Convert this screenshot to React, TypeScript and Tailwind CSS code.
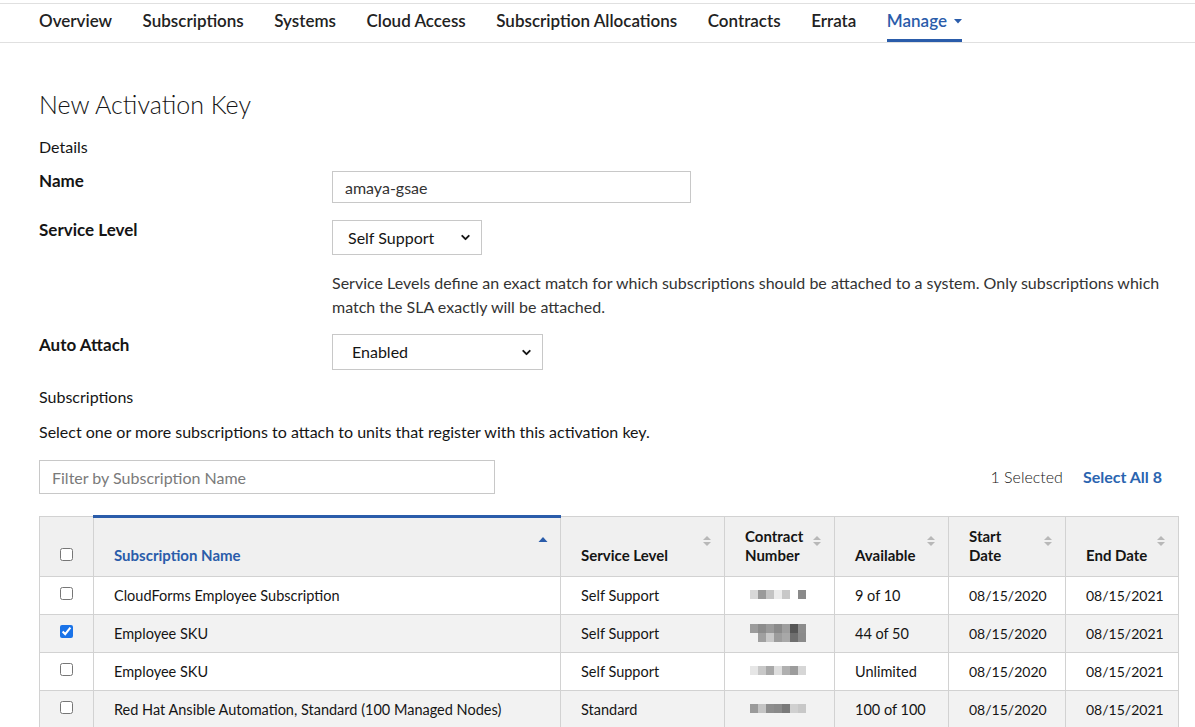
import { ChevronDown } from "lucide-react";

const BLUE = "#2a5caa";

const navItems = [
  "Overview",
  "Subscriptions",
  "Systems",
  "Cloud Access",
  "Subscription Allocations",
  "Contracts",
  "Errata",
];

type Row = {
  name: string;
  level: string;
  contract: string[][];
  available: string;
  checked: boolean;
};

const rows: Row[] = [
  {
    name: "CloudForms Employee Subscription",
    level: "Self Support",
    contract: [["#d8d8d8", "#9a9a9a", "#c4c4c4", "#ececec", "#c8c8c8", "#ffffff", "#8a8a8a"]],
    available: "9 of 10",
    checked: false,
  },
  {
    name: "Employee SKU",
    level: "Self Support",
    contract: [
      ["#9c9c9c", "#8c8c8c", "#9a9a9a", "#8a8a8a", "#9e9e9e", "#555555", "#8c8c8c"],
      ["#f2f2f2", "#a0a0a0", "#c8c8c8", "#9c9c9c", "#a8a8a8", "#6e6e6e", "#8a8a8a"],
    ],
    available: "44 of 50",
    checked: true,
  },
  {
    name: "Employee SKU",
    level: "Self Support",
    contract: [["#e6e6e6", "#c8c8c8", "#a8a8a8", "#dedede", "#b0b0b0", "#9c9c9c", "#d6d6d6"]],
    available: "Unlimited",
    checked: false,
  },
  {
    name: "Red Hat Ansible Automation, Standard (100 Managed Nodes)",
    level: "Standard",
    contract: [["#9a9a9a", "#c4c4c4", "#8e8e8e", "#8a8a8a", "#7a7a7a", "#d0d0d0", "#c8c8c8"]],
    available: "100 of 100",
    checked: false,
  },
];

function SortIcon({ active }: { active?: boolean }) {
  if (active) {
    return (
      <svg width="10" height="12" viewBox="0 0 10 12" className="shrink-0 self-center">
        <path d="M0.5 6 L5 1 L9.5 6 Z" fill={BLUE} />
      </svg>
    );
  }
  return (
    <svg width="10" height="12" viewBox="0 0 10 12" className="shrink-0 self-center">
      <path d="M1 5 L5 1 L9 5 Z" fill="#b8b8b8" />
      <path d="M1 7 L5 11 L9 7 Z" fill="#b8b8b8" />
    </svg>
  );
}

function Pixels({ grid }: { grid: string[][] }) {
  return (
    <div className="flex flex-col">
      {grid.map((line, i) => (
        <div key={i} className="flex">
          {line.map((c, j) => (
            <div key={j} className="h-[9px] w-[8px]" style={{ backgroundColor: c }} />
          ))}
        </div>
      ))}
    </div>
  );
}

function Th({
  children,
  active,
  className = "",
}: {
  children: React.ReactNode;
  active?: boolean;
  className?: string;
}) {
  return (
    <th
      className={`h-[60px] border border-[#d2d2d2] p-0 align-bottom ${
        active ? "border-t-[3px] border-t-[#2a5caa]" : ""
      } ${className}`}
    >
      <div className="flex h-full items-end justify-between pb-[11px] pl-[20px] pr-[12px]">
        <span
          className={`text-left text-[15px] font-bold leading-[19px] ${
            active ? "text-[#2a5caa]" : "text-[#151515]"
          }`}
        >
          {children}
        </span>
        <SortIcon active={active} />
      </div>
    </th>
  );
}

export default function App() {
  return (
    <div className="min-h-screen bg-white font-['Lato',sans-serif] text-[#151515]">
      <div className="pt-[3px]">
        <nav className="flex h-[40px] gap-[30.5px] border-y border-[#e0e0e0] pl-[39px]">
          {navItems.map((item) => (
            <div key={item} className="flex items-center pb-[4px] text-[17px] font-semibold text-[#222]">
              {item}
            </div>
          ))}
          <div className="flex items-center gap-[7px] border-b-[3px] border-[#2a5caa] pb-[1px] text-[17px] font-semibold text-[#2a5caa]">
            Manage
            <svg width="8" height="5" viewBox="0 0 8 5">
              <path d="M0 0 L8 0 L4 4.5 Z" fill={BLUE} />
            </svg>
          </div>
        </nav>
      </div>

      <main className="pl-[39px] pr-[17px]">
        <h1 className="mt-[45px] text-[25px] font-light leading-[32px] text-[#151515]">New Activation Key</h1>

        <div className="mt-[17px] text-[16px] leading-5">Details</div>

        <div className="mt-[14px] grid grid-cols-[293px_1fr]">
          <div className="text-[17px] font-bold leading-5">Name</div>
          <div>
            <input
              readOnly
              value="amaya-gsae"
              className="h-[32px] w-[359px] border border-[#c8c8c8] px-[12px] text-[16px] text-[#333] outline-none"
            />
          </div>

          <div className="mt-[17px] text-[17px] font-bold leading-5">Service Level</div>
          <div className="mt-[17px]">
            <div className="flex h-[35px] w-[150px] items-center justify-between border border-[#c8c8c8] pl-[15px] pr-[9px] text-[16px]">
              <span>Self Support</span>
              <ChevronDown size={13} strokeWidth={3.5} />
            </div>
            <p className="mt-[16px] text-[16px] leading-[24px] text-[#333]">
              Service Levels define an exact match for which subscriptions should be attached to a system. Only
              subscriptions which
              <br />
              match the SLA exactly will be attached.
            </p>
          </div>

          <div className="mt-[16px] text-[17px] font-bold leading-5">Auto Attach</div>
          <div className="mt-[15px]">
            <div className="flex h-[36px] w-[211px] items-center justify-between border border-[#c8c8c8] pl-[19px] pr-[9px] text-[16px]">
              <span>Enabled</span>
              <ChevronDown size={13} strokeWidth={3.5} />
            </div>
          </div>
        </div>

        <div className="mt-[17px] text-[16px] leading-5">Subscriptions</div>
        <div className="mt-[15px] text-[16px] leading-5">
          Select one or more subscriptions to attach to units that register with this activation key.
        </div>

        <div className="mt-[18px] flex items-center justify-between">
          <input
            placeholder="Filter by Subscription Name"
            className="h-[34px] w-[456px] border border-[#c8c8c8] px-[12px] text-[16px] outline-none placeholder:text-[#7a7a7a]"
          />
          <div className="flex items-center gap-[20px] pr-[16px] text-[16px]">
            <span className="font-light">1 Selected</span>
            <span className="font-bold text-[#2a64b0]">Select All 8</span>
          </div>
        </div>

        <table className="mt-[21px] w-[1139px] table-fixed border-collapse">
          <colgroup>
            <col className="w-[54px]" />
            <col className="w-[467px]" />
            <col className="w-[164px]" />
            <col className="w-[110px]" />
            <col className="w-[114px]" />
            <col className="w-[117px]" />
            <col className="w-[113px]" />
          </colgroup>
          <thead className="bg-[#f0f0f0]">
            <tr>
              <th className="h-[60px] border border-[#d2d2d2] p-0 align-bottom">
                <div className="flex justify-center pb-[15px]">
                  <input type="checkbox" readOnly className="h-[13px] w-[13px]" />
                </div>
              </th>
              <Th active>Subscription Name</Th>
              <Th>Service Level</Th>
              <Th>
                Contract
                <br />
                Number
              </Th>
              <Th>Available</Th>
              <Th>
                Start
                <br />
                Date
              </Th>
              <Th>End Date</Th>
            </tr>
          </thead>
          <tbody>
            {rows.map((r, i) => (
              <tr key={i} className={i % 2 === 1 ? "bg-[#f2f2f2]" : "bg-white"}>
                <td className="h-[38px] border border-[#d2d2d2] p-0">
                  <div className="flex justify-center pb-[5px]">
                    <input
                      type="checkbox"
                      readOnly
                      checked={r.checked}
                      className="h-[13px] w-[13px] accent-[#1a73e8]"
                    />
                  </div>
                </td>
                <td className="border border-[#d2d2d2] pl-[20px] text-[14.5px]">{r.name}</td>
                <td className="border border-[#d2d2d2] pl-[20px] text-[14.5px]">{r.level}</td>
                <td className="border border-[#d2d2d2] pl-[20px]">
                  <div className="flex pb-[2px] pl-[5px]">
                    <Pixels grid={r.contract} />
                  </div>
                </td>
                <td className="border border-[#d2d2d2] pl-[20px] text-[14.5px]">{r.available}</td>
                <td className="border border-[#d2d2d2] pl-[20px] text-[14px]">08/15/2020</td>
                <td className="border border-[#d2d2d2] pl-[20px] text-[14px]">08/15/2021</td>
              </tr>
            ))}
          </tbody>
        </table>
      </main>
    </div>
  );
}
